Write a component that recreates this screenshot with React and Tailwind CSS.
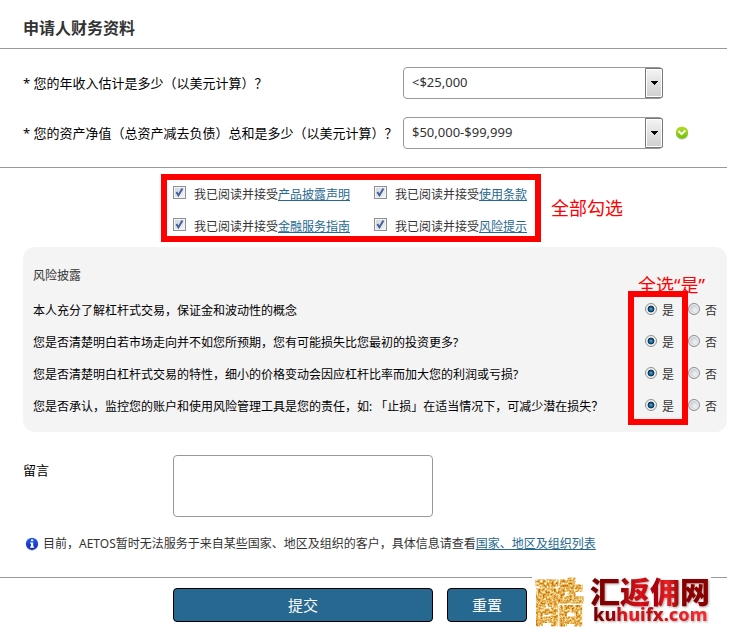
import React from 'react';

const INCOME_OPTIONS = ['<$25,000', '$25,000-$49,999', '$50,000-$99,999', '>$100,000'];

const AGREEMENTS = [
    { id: 'pds', link: '产品披露声明' },
    { id: 'terms', link: '使用条款' },
    { id: 'fsg', link: '金融服务指南' },
    { id: 'risk', link: '风险提示' },
];

const RISK_QUESTIONS = [
    '本人充分了解杠杆式交易，保证金和波动性的概念',
    '您是否清楚明白若市场走向并不如您所预期，您有可能损失比您最初的投资更多?',
    '您是否清楚明白杠杆式交易的特性，细小的价格变动会因应杠杆比率而加大您的利润或亏损?',
    '您是否承认，监控您的账户和使用风险管理工具是您的责任，如: 「止损」在适当情况下，可减少潜在损失？',
];

function SelectRow({ id, label, value, valid }) {
    return (
        <div className="flex items-center">
            <label htmlFor={id} className="w-[380px] shrink-0 whitespace-nowrap text-[13px] leading-5 text-black">
                {label}
            </label>
            <div className="relative w-[260px]">
                <select
                    id={id}
                    defaultValue={value}
                    className="block h-8 w-full appearance-none rounded border border-[#999] bg-white pl-2 text-[13px] text-[#333]"
                >
                    {INCOME_OPTIONS.map((option) => (
                        <option key={option}>{option}</option>
                    ))}
                </select>
                {/* Arrow button, clicks go through to the select */}
                <span className="pointer-events-none absolute inset-y-px right-0 flex w-[18px] items-center justify-center rounded-r-xs border border-[#777] bg-linear-to-b from-[#f4f4f4] to-[#cfcfcf] shadow-[inset_0_0_0_1px_#fff]">
                    <svg width="7" height="4" viewBox="0 0 7 4" shapeRendering="crispEdges">
                        <path d="M0 0h7v1H6v1H5v1H4v1H3V3H2V2H1V1H0z" fill="#000" />
                    </svg>
                </span>
            </div>
            {valid && (
                <svg className="ml-3" width="14" height="14" viewBox="0 0 14 14" role="img" aria-label="有效">
                    <defs>
                        <linearGradient id="ok" x1="0" y1="0" x2="0" y2="1">
                            <stop offset="0" stopColor="#b4dc28" />
                            <stop offset="1" stopColor="#6fc400" />
                        </linearGradient>
                    </defs>
                    <circle cx="7" cy="7.6" r="6.2" fill="#ccc" />
                    <circle cx="7" cy="6.6" r="6.1" fill="url(#ok)" />
                    <path d="M3.4 5 6.6 8.2 10.4 4.4" fill="none" stroke="#fff" strokeWidth="2" />
                </svg>
            )}
        </div>
    );
}

function Agreement({ id, link }) {
    return (
        <div className="flex items-start">
            <span className="relative mt-px h-[13px] w-[13px] shrink-0">
                <input
                    id={id}
                    type="checkbox"
                    defaultChecked
                    className="peer block h-[13px] w-[13px] appearance-none border border-[#8e8f8f] bg-linear-to-br from-[#cfd3da] to-[#f6f6f6] shadow-[inset_0_0_0_1px_#f4f4f4]"
                />
                <svg
                    className="pointer-events-none invisible absolute inset-0 peer-checked:visible"
                    width="13"
                    height="13"
                    viewBox="0 0 13 13"
                >
                    <path d="M3.4 6 5.4 9.4 9.4 2.6" fill="none" stroke="#42609f" strokeWidth="2" />
                </svg>
            </span>
            <span className="ml-2 whitespace-nowrap text-xs leading-5 text-[#333]">
                <label htmlFor={id}>我已阅读并接受</label>
                <a href="#" className="text-[#266890] underline">{link}</a>
            </span>
        </div>
    );
}

function Radio({ name, label, checked }) {
    return (
        <label className="flex items-start">
            <input
                type="radio"
                name={name}
                defaultChecked={checked}
                className="mt-0.5 h-3 w-3 appearance-none rounded-full border border-[#8e8f8f] bg-[radial-gradient(circle_at_60%_60%,#f4f4f6_0,#c9ccd4_60%)] shadow-[inset_0_0_0_1px_#f4f4f4] checked:bg-[radial-gradient(circle_at_50%_50%,#5cc0ea_0,#1c6a9c_22%,#0d2f4c_42%,#e8ecef_54%)]"
            />
            <span className="ml-[5px] text-xs leading-5">{label}</span>
        </label>
    );
}

function Logo() {
    return (
        <svg
            className="block overflow-visible bg-white"
            width="179"
            height="56"
            viewBox="0 0 179 56"
            role="img"
            aria-label="酷汇返佣网"
        >
            <defs>
                <linearGradient id="red" x1="0" y1="0" x2="1" y2="0">
                    <stop offset="0" stopColor="#7c0000" />
                    <stop offset="0.22" stopColor="#860000" />
                    <stop offset="0.42" stopColor="#d81218" />
                    <stop offset="0.55" stopColor="#a80008" />
                    <stop offset="0.64" stopColor="#f0242a" />
                    <stop offset="0.76" stopColor="#8a0000" />
                    <stop offset="1" stopColor="#8a0404" />
                </linearGradient>
                <linearGradient id="redUrl" x1="0" y1="0" x2="1" y2="0">
                    <stop offset="0" stopColor="#780000" />
                    <stop offset="0.16" stopColor="#960008" />
                    <stop offset="0.32" stopColor="#f01c22" />
                    <stop offset="0.52" stopColor="#b40c10" />
                    <stop offset="0.68" stopColor="#e01c20" />
                    <stop offset="1" stopColor="#f43034" />
                </linearGradient>
                {/* Gold glitter: noise mapped to a yellow ramp, clipped to the glyph */}
                <filter id="gold" colorInterpolationFilters="sRGB">
                    <feTurbulence type="fractalNoise" baseFrequency="0.45" numOctaves="2" seed="4" />
                    <feColorMatrix values="0.5 0 0 0 0.65  1.1 0 0 0 0.15  1.7 0 0 0 -0.5  0 0 0 0 1" />
                    <feComposite in2="SourceGraphic" operator="in" />
                </filter>
                <filter id="shadow">
                    <feDropShadow dx="1" dy="1" stdDeviation="1" floodColor="#000" floodOpacity="0.35" />
                </filter>
            </defs>
            <text
                x="2"
                y="47"
                fontSize="50"
                fontWeight="900"
                fill="#e0a63a"
                stroke="#e0a63a"
                strokeWidth="1"
                filter="url(#gold)"
            >
                酷
            </text>
            <g filter="url(#shadow)">
                <text x="58" y="29" fontSize="30" fontWeight="900" fill="url(#red)">汇返佣网</text>
                <text x="61" y="47" fontSize="18" fontWeight="800" fontFamily="Noto Sans" fill="url(#redUrl)">kuhuifx.com</text>
            </g>
        </svg>
    );
}

export default function App() {
    return (
        <form
            className="bg-white pr-[7px] font-['Noto_Sans','Noto_Sans_CJK_SC',sans-serif] text-[#333]"
            onSubmit={(e) => e.preventDefault()}
        >
            <h2 className="border-b border-[#999] pt-4 pb-2 pl-[23px] text-base leading-6 font-bold">申请人财务资料</h2>

            <section className="flex flex-col gap-[18px] border-b border-[#999] py-[18px] pl-[23px]">
                <SelectRow id="income" label="* 您的年收入估计是多少（以美元计算）？" value="<$25,000" />
                <SelectRow
                    id="assets"
                    label="* 您的资产净值（总资产减去负债）总和是多少（以美元计算）？"
                    value="$50,000-$99,999"
                    valid
                />
            </section>

            <section className="flex items-center gap-2.5 pt-1.5 pl-[161px]">
                <div className="grid h-[68px] w-[380px] grid-cols-[201px_1fr] gap-y-3 border-6 border-[#f00] pt-[5px] pl-1.5">
                    {AGREEMENTS.map((item) => (
                        <Agreement key={item.id} {...item} />
                    ))}
                </div>
                <p className="text-lg leading-6 whitespace-nowrap text-[#f00]">全部勾选</p>
            </section>

            <section className="relative mt-[5px] ml-[23px] rounded-xl bg-[#f4f4f4] pt-[19px] pr-2.5 pb-[15px] pl-2.5">
                <h3 className="text-xs leading-5">风险披露</h3>
                <div className="mt-[15px] flex flex-col gap-3">
                    {RISK_QUESTIONS.map((question, i) => (
                        <div
                            key={question}
                            role="radiogroup"
                            aria-labelledby={`risk-${i}`}
                            className="flex items-start justify-between"
                        >
                            <p id={`risk-${i}`} className="text-xs leading-5 whitespace-nowrap text-black">{question}</p>
                            <div className="flex gap-3.5">
                                <Radio name={`risk-${i}`} label="是" checked />
                                <Radio name={`risk-${i}`} label="否" />
                            </div>
                        </div>
                    ))}
                </div>

                {/* Annotation marks over the "yes" column */}
                <p className="absolute top-[26px] right-[22px] text-lg leading-6 whitespace-nowrap text-[#f00]">全选“是”</p>
                <div className="pointer-events-none absolute top-11 right-[39px] h-[134px] w-[60px] border-6 border-[#f00]" />
            </section>

            <section className="flex items-start pt-[23px] pl-[23px]">
                <label htmlFor="message" className="mt-[5px] w-[150px] text-[13px] leading-5 text-black">留言</label>
                <textarea id="message" className="block h-[62px] w-[260px] resize-none rounded border border-[#999] bg-white p-2 text-xs" />
            </section>

            <div className="flex items-center border-b border-[#999] pt-[17px] pb-[23px] pl-[25px] text-xs leading-5">
                <svg width="14" height="14" viewBox="0 0 14 14" aria-hidden="true">
                    <defs>
                        <linearGradient id="info" x1="0" y1="0" x2="0" y2="1">
                            <stop offset="0" stopColor="#2a62ee" />
                            <stop offset="1" stopColor="#0a25b4" />
                        </linearGradient>
                    </defs>
                    <circle cx="7" cy="7.6" r="6.2" fill="#c4c4c4" />
                    <circle cx="7" cy="6.8" r="6.1" fill="url(#info)" />
                    <path d="M6 2.4h2.2v1.9H6zM5 5.4h3.2v4.2H9.2v1.2H5V9.6h1V6.6H5z" fill="#fff" />
                </svg>
                <p className="ml-1 whitespace-nowrap">
                    目前，AETOS暂时无法服务于来自某些国家、地区及组织的客户，具体信息请查看
                    <a href="#" className="text-[#266890] underline">国家、地区及组织列表</a>
                </p>
            </div>

            <footer className="relative flex gap-3.5 pt-2.5 pb-3.5 pl-[173px]">
                <button type="submit" className="h-[34px] w-[260px] rounded border border-black bg-[#266890] text-[15px] text-white">
                    提交
                </button>
                <button type="reset" className="h-[34px] w-20 rounded border border-black bg-[#266890] text-[15px] text-white">
                    重置
                </button>
                <div className="absolute -top-1 right-4">
                    <Logo />
                </div>
            </footer>
        </form>
    );
}
